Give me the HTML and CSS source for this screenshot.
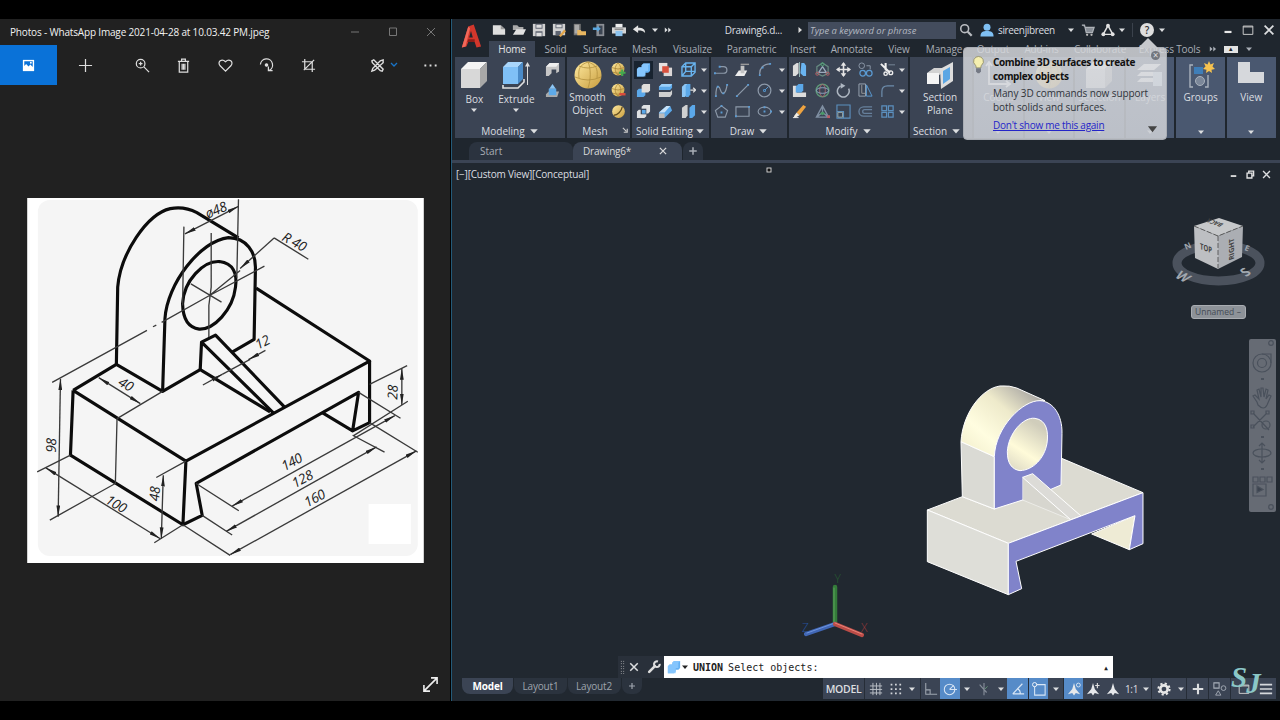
FILE: index.html
```html
<!DOCTYPE html>
<html lang="en">
<head>
  <meta charset="UTF-8" />
  <meta name="viewport" content="width=device-width, initial-scale=1.0"/>
  <title>Drawing6.dwg</title>
  <link rel="stylesheet" href="styles.css">
</head>
<body>
  <!-- Icon sprites -->
  <svg class="sprites" aria-hidden="true">
    <defs>
      <linearGradient id="goldFill" x1="0" y1="0" x2="1" y2="1"><stop offset="0" stop-color="#ffeaa0"/><stop offset="1" stop-color="#c89d3e"/></linearGradient>
      <linearGradient id="cyl" x1="0" y1="1" x2="1" y2="0"><stop offset="0" stop-color="#f0ecca"/><stop offset=".3" stop-color="#fffde0"/><stop offset=".6" stop-color="#eeeacb"/><stop offset="1" stop-color="#8f8d94"/></linearGradient>
      <linearGradient id="hole" x1="0" y1="1" x2=".5" y2="0"><stop offset="0" stop-color="#d9d5c2"/><stop offset=".45" stop-color="#fffbd9"/><stop offset="1" stop-color="#d0cdbb"/></linearGradient>
      <marker id="arr" viewBox="0 0 30 10" refX="30" refY="5" markerWidth="34" markerHeight="13" markerUnits="userSpaceOnUse" orient="auto-start-reverse"><path d="M0 0L30 5L0 10z" fill="#222"/></marker>
    </defs>
    <symbol id="caret" viewBox="0 0 8 8"><path d="M1 2.500h6L4 6z" fill="currentColor"/></symbol>
    <symbol id="more" viewBox="0 0 10 8"><path d="M1 1l3.500 3L1 7zM5.300 1l3.500 3-3.500 3z" fill="currentColor"/></symbol>
    <symbol id="new" viewBox="0 0 16 16"><path d="M1 2.500h9l5 4.500v6.500H1z" fill="#dedede"/><path d="M10 2.500v4.500h5z" fill="#999"/></symbol>
    <symbol id="open" viewBox="0 0 16 16"><path d="M1 13.500V2.500h5l2 2h5V8H1z" fill="#aaa"/><path d="M5 7h11l-3 6.500H1z" fill="#e1e1e1"/></symbol>
    <symbol id="save" viewBox="0 0 16 16"><path d="M1 1h14v14H1z" fill="#d0d0d0"/><path d="M4 1h8v5.500H4zM4 9.500h8V15H4z" fill="#5d6370"/><path d="M5 2h6v3.500H5zM5 11h6v4H5z" fill="#ddd"/></symbol>
    <symbol id="saveas" viewBox="0 0 16 16"><path d="M1 1h14v13H1z" fill="#d0d0d0"/><path d="M4 1h8v5H4zM4 9h6v5H4z" fill="#5d6370"/><path d="M5 2h6v3H5z" fill="#ddd"/><path d="M8 14.500l6-7 2 2L10 16z" fill="#e3a64b"/></symbol>
    <symbol id="import" viewBox="0 0 16 16"><path d="M2 1h8v13H2z" fill="#777"/><path d="M3 2h5v10H3z" fill="#aaa"/><path d="M6 8h4l1 1.500h5V14H6z" fill="#e8b660"/></symbol>
    <symbol id="export" viewBox="0 0 16 16"><path d="M5 1h9v14H5z" fill="#8b8f95"/><path d="M8 3h4v10H8z" fill="#3c4552"/><path d="M1 5h5V3l4 3.500L6 10V8H1z" fill="#59a7e0"/></symbol>
    <symbol id="print" viewBox="0 0 16 16"><path d="M4 1h8v4H4z" fill="#eee"/><path d="M0 5h16v7H0z" fill="#d4d4d4"/><path d="M4 9h8v6H4z" fill="#8cc3ee"/><path d="M3 6.500h10v1H3z" fill="#555"/></symbol>
    <symbol id="undo" viewBox="0 0 16 16"><path d="M1 7l6-4.500v3c5 0 8 1.500 8 6-2-2.500-4-3-8-3v3z" fill="#e4e4e4"/></symbol>
    <symbol id="search" viewBox="0 0 16 16"><circle cx="6.500" cy="6.500" r="4.500" fill="none" stroke="#b9bcc1" stroke-width="1.800"/><path d="M10 10l4.500 4.500" stroke="#b9bcc1" stroke-width="2.600"/></symbol>
    <symbol id="user" viewBox="0 0 16 16"><circle cx="8" cy="4.800" r="4" fill="#7fc0f4"/><path d="M.5 15.500c0-5.500 3-6.500 7.500-6.500s7.500 1 7.500 6.500z" fill="#7fc0f4"/></symbol>
    <symbol id="cart" viewBox="0 0 16 16"><path d="M1 2.500h3l2 8.500h7l2-6H5" fill="#888e96" stroke="#aeb2b8" stroke-width="1.400"/><circle cx="7" cy="13.500" r="1.300" fill="#bbb"/><circle cx="12" cy="13.500" r="1.300" fill="#bbb"/></symbol>
    <symbol id="apps" viewBox="0 0 16 16"><path d="M8 3L2.500 13h11z" fill="none" stroke="#e2e2e2" stroke-width="1.700"/><circle cx="8" cy="3" r="2.200" fill="#e2e2e2"/><circle cx="2.700" cy="12.800" r="2.200" fill="#e2e2e2"/><circle cx="13.300" cy="12.800" r="2.200" fill="#e2e2e2"/></symbol>
    <symbol id="minimize" viewBox="0 0 16 16"><path d="M4 9h8v2.500H4z" fill="#e8e8e8"/></symbol>
    <symbol id="maximize" viewBox="0 0 16 16"><path d="M2.500 3.500h11v9.500h-11zM2.500 4.500h11" fill="none" stroke="#ccc" stroke-width="1.100"/></symbol>
    <symbol id="restore" viewBox="0 0 16 16"><path d="M5.500 5V3h7v7h-2M3 6h7v7H3z" fill="none" stroke="#e3e3e3" stroke-width="2"/></symbol>
    <symbol id="close" viewBox="0 0 16 16"><path d="M3 3l10 10M13 3L3 13" stroke="currentColor" stroke-width="2"/></symbol>
    <symbol id="plus" viewBox="0 0 16 16"><path d="M8 2v12M2 8h12" stroke="currentColor" stroke-width="2.400"/></symbol>

    <!-- ribbon, large -->
    <symbol id="box" viewBox="0 0 28 28"><path d="M1 8L8 1h19l-7 7z" fill="#f4f4f4"/><path d="M1 8h19v19H1z" fill="#d8d8d8"/><path d="M20 8l7-7v19l-7 7z" fill="#a8a8a8"/></symbol>
    <symbol id="extrude" viewBox="0 0 28 28"><path d="M1 6l5-5h15l-5 5z" fill="#a9d6fb"/><path d="M1 6h15v17H1z" fill="#7fc0f6"/><path d="M16 6l5-5v17l-5 5z" fill="#4a8bc8"/><path d="M1 24v3h15l6-6v-3" fill="none" stroke="#e1e1e1" stroke-width="1.600"/><path d="M25.500 4v20" stroke="#ddd"/><path d="M23 5.500L25.500 1 28 5.500z" fill="#ddd"/></symbol>
    <symbol id="sphere" viewBox="0 0 28 28"><circle cx="14" cy="14" r="13.500" fill="url(#goldFill)"/><path d="M1 16q13 6 26 0M14 1c-8 3-10 6-9 16M14 1c3 6 3 18 0 26M14 1c8 3 10 6 9 16M5 5q9 4 18 0" fill="none" stroke="#b3913f" stroke-width=".8"/></symbol>
    <symbol id="section" viewBox="0 0 28 28"><path d="M1 12l7-5h11v4l-6 3v9H1z" fill="#d2d2d2"/><path d="M1 12h12v11H1z" fill="#f4f4f4"/><path d="M14 8L27 1v19l-12 8z" fill="#ddd"/><path d="M17 10l7-4v12l-7 5z" fill="#5ba6e4"/></symbol>
    <symbol id="groups" viewBox="0 0 28 28"><path d="M6 4H3v22h3M18 26h3V14" fill="none" stroke="#aab2bd" stroke-width="1.400"/><path d="M7 6h9v7H7z" fill="#3f7eb8"/><circle cx="13" cy="20" r="4.500" fill="#7b8799" stroke="#aab2bd"/><path d="M22 0l1.500 3.500L27 2l-1.500 3.500L28 8l-3.500.7L25 12l-3-2-3 2 .5-3.300L16 8l2.500-2.500L17 2l3.500 1.500z" fill="#f6c24f"/></symbol>
    <symbol id="viewbig" viewBox="0 0 28 28"><path d="M1 1h12v10h14v11H1z" fill="#d6d8dc"/></symbol>
    <symbol id="coords" viewBox="0 0 28 28"><path d="M5 2v21h20M2 5l3-4 3 4M22 20l4 3-4 3" fill="none" stroke="#eee" stroke-width="1.800"/></symbol>
    <symbol id="layers" viewBox="0 0 28 28"><path d="M1 9l7-6h17l-7 6zM1 15l4-4h17l-4 4zM1 21l4-4h12v4z" fill="#f3f3f3"/><path d="M17 11h9v14h-9z" fill="#c5d7e8"/></symbol>

    <!-- ribbon, small -->
    <symbol id="polysolid" viewBox="0 0 16 16"><path d="M1 5l4-4h10v9l-3 2V8H7v4l-3 3H1z" fill="#c6c6c6"/><path d="M1 5l4-4h10l-3 4z" fill="#efefef"/></symbol>
    <symbol id="presspull" viewBox="0 0 16 16"><path d="M1 12l3-3h11l-2 6H1z" fill="#aaa"/><path d="M4 6h8v7H4z" fill="#5da9e8"/><path d="M8 1l3.500 5h-7z" fill="#8cc6f5"/></symbol>
    <symbol id="ball" viewBox="0 0 16 16"><circle cx="7.500" cy="7.500" r="6.800" fill="url(#goldFill)"/><path d="M1 6q6.500 3 13 0M2 11q5.500 2 11 0M7.500 1c-4 4-4 9 0 13M7.500 1c4 4 4 9 0 13" fill="none" stroke="#a78336" stroke-width=".8"/></symbol>
    <symbol id="meshmore" viewBox="0 0 16 16"><use href="#ball"/><path d="M12 8v7M8.500 11.500h7" stroke="#43a84d" stroke-width="2.300"/></symbol>
    <symbol id="meshless" viewBox="0 0 16 16"><use href="#ball"/><path d="M9 12h6.500" stroke="#d84a3c" stroke-width="2.600"/></symbol>
    <symbol id="refine" viewBox="0 0 16 16"><circle cx="8" cy="8" r="6.800" fill="url(#goldFill)"/><path d="M3 12c4 0 8-4 9-9" fill="none" stroke="#675020" stroke-width="1.400"/></symbol>
    <symbol id="union" viewBox="0 0 16 16"><path d="M1 7l2-2h3V3l2-2h7v8l-2 2h-3v2l-2 2H1z" fill="#64b1f3"/><path d="M1 7l2-2h3V3l2-2h7l-2 2v6h-3v6H1z" fill="#8ccbff" opacity=".8"/></symbol>
    <symbol id="intersect" viewBox="0 0 16 16"><path d="M1 1h9v9H1z" fill="#e6e0df"/><path d="M6 6h9v9H6z" fill="#dcd7d7"/><path d="M4.500 4.500h7v7h-7z" fill="#d9513e"/></symbol>
    <symbol id="cubewire" viewBox="0 0 16 16"><path d="M1 5l4-4h10v10l-4 4H1zM1 5h10v10M11 5l4-4M5 1v9h10M5 10l-4 5" fill="none" stroke="#68b3ee" stroke-width="1.500"/></symbol>
    <symbol id="subtract" viewBox="0 0 16 16"><path d="M1 8l2-2h7v7l-2 2H1z" fill="#5ba8e9"/><path d="M6 3l2-2h7v7l-2 2H6z" fill="#e0ddda"/></symbol>
    <symbol id="slice" viewBox="0 0 16 16"><path d="M1 4l3-3h11v4l-2 2.500H1z" fill="#5ba8e9"/><path d="M1 4l3-3h11l-2 3z" fill="#9bd0fa"/><path d="M1 9.500h12l2-2V12l-2 3H1z" fill="#d0d0d0"/></symbol>
    <symbol id="extface" viewBox="0 0 16 16"><path d="M1 4l3-3h3v11l-3 3H1z" fill="#8cc6f5"/><path d="M5 3l2-2h3v11l-2 3H5z" fill="#5ba8e9"/><path d="M10 7.500h5M13 5l2.500 2.500L13 10" stroke="#ddd" stroke-width="1.400" fill="none"/></symbol>
    <symbol id="interfere" viewBox="0 0 16 16"><path d="M1 8l2-2h8v7l-2 2H1zM6 3l2-2h7v7l-2 2H6z" fill="#dfe1e3"/><path d="M5 5h6v6H5z" fill="#3b4454"/><path d="M6.300 6.300h4v4h-4z" fill="#5ba8e9"/></symbol>
    <symbol id="fillet3" viewBox="0 0 16 16"><path d="M1 9l8-7h4l2 5-8 8H1z" fill="#5ba8e9"/><path d="M1 9l8-7h4L7 9z" fill="#c9e2f7"/><path d="M1 10h6v5H1z" fill="#bbb"/></symbol>
    <symbol id="split" viewBox="0 0 16 16"><path d="M1 4l4-3h2v11l-2 3H1z" fill="#d0d0d0"/><path d="M9 4l3-3h3v11l-3 3H9z" fill="#5ba8e9"/></symbol>
    <symbol id="polyline" viewBox="0 0 16 16"><path d="M1 12h9c5 0 5-7 0-7H6" fill="none" stroke="#8d99a9" stroke-width="1.300"/><path d="M0 11h2v2H0zM5 4h2v2H5z" fill="#5b9bd3"/></symbol>
    <symbol id="planar" viewBox="0 0 16 16"><path d="M4 9h9l-3 6H0z" fill="#ececec"/><path d="M6 4h4v8H6z" fill="#c3c3c3"/><path d="M6 2.500h9" stroke="#999" stroke-width="1.500"/></symbol>
    <symbol id="arc" viewBox="0 0 16 16"><path d="M3 14C2 7 7 2 14 2" fill="none" stroke="#8d99a9" stroke-width="1.300"/><path d="M2 13h2v2H2zM5 5h2v2H5zM13 1h2v2h-2z" fill="#5b9bd3"/></symbol>
    <symbol id="spline" viewBox="0 0 16 16"><path d="M2 14C2 7 3 3 5 4s2 8 5 7 3-5 4-9" fill="none" stroke="#8d99a9" stroke-width="1.300"/><path d="M1 13h2v2H1zM3 3h2v2H3zM9 10h2v2H9zM13 1h2v2h-2z" fill="#5b9bd3"/></symbol>
    <symbol id="line" viewBox="0 0 16 16"><path d="M2 14L14 2" stroke="#8d99a9" stroke-width="1.300"/><path d="M1 13h2v2H1zM13 1h2v2h-2z" fill="#5b9bd3"/></symbol>
    <symbol id="circle" viewBox="0 0 16 16"><circle cx="8" cy="8" r="6.800" fill="none" stroke="#8d99a9" stroke-width="1.300"/><path d="M8 8l4-4M7 7h2v2H7z" stroke="#5b9bd3"/></symbol>
    <symbol id="polygon" viewBox="0 0 16 16"><path d="M8 2l6.500 5-2.500 7H4L1.500 7z" fill="none" stroke="#8d99a9" stroke-width="1.200"/><path d="M7 8h2v2H7zM7 1h2v2H7z" fill="#5b9bd3"/></symbol>
    <symbol id="rect" viewBox="0 0 16 16"><path d="M1 3h14v10H1z" fill="none" stroke="#8d99a9" stroke-width="1.200"/><path d="M0 12h2v2H0zM14 2h2v2h-2z" fill="#5b9bd3"/></symbol>
    <symbol id="ellipse" viewBox="0 0 16 16"><ellipse cx="8" cy="8" rx="6.800" ry="4.700" fill="none" stroke="#8d99a9" stroke-width="1.200"/><path d="M7 7h2v2H7zM14 7h2v2h-2zM7 2.500h2v2H7z" fill="#5b9bd3"/></symbol>
    <symbol id="mirror3" viewBox="0 0 16 16"><path d="M1 4l4-3h2v11l-3 3H1z" fill="#dcdcdc"/><path d="M10 1h3l2 3v11h-3l-3-3z" fill="#6ab4f1"/><path d="M8 0v16" stroke="#9bb"/></symbol>
    <symbol id="gizmomove" viewBox="0 0 16 16"><path d="M8 1l6 4v7l-6 3-6-3V5z" fill="none" stroke="#678b82" stroke-width="1.300"/><path d="M8 5l4 6H4z" stroke="#9aa9bb" fill="none" stroke-width="1.400"/><circle cx="2.500" cy="12.500" r="1.700" fill="none" stroke="#b95c64"/><circle cx="13.500" cy="12.500" r="1.700" fill="none" stroke="#b95c64"/><circle cx="8" cy="2.500" r="1.600" fill="none" stroke="#4daa72"/></symbol>
    <symbol id="move" viewBox="0 0 16 16"><path d="M8 1v14M1 8h14" stroke="#e5e5e5" stroke-width="1.700"/><path d="M8 0l3 4H5zM8 16l3-4H5zM0 8l4-3v6zM16 8l-4-3v6z" fill="#e5e5e5"/></symbol>
    <symbol id="copy" viewBox="0 0 16 16"><circle cx="4" cy="4" r="3" fill="none" stroke="#8d99a9"/><circle cx="5" cy="12" r="3" fill="none" stroke="#5b9bd3" stroke-width="1.300"/><circle cx="12" cy="12" r="3" fill="none" stroke="#5b9bd3" stroke-width="1.300"/><path d="M9 4h4v4" stroke="#8d99a9" fill="none"/></symbol>
    <symbol id="trim" viewBox="0 0 16 16"><path d="M1 2l9 9M6 1v7l5 3" stroke="#eee" stroke-width="2.200" fill="none"/><circle cx="6" cy="12.500" r="1.800" fill="none" stroke="#eee" stroke-width="1.500"/><circle cx="11.500" cy="11.500" r="2" fill="none" stroke="#eee" stroke-width="1.500"/><path d="M9 3h7" stroke="#789"/></symbol>
    <symbol id="align" viewBox="0 0 16 16"><path d="M1 3h4v9H1zM1 10h14v5H1z" fill="#ddd"/><path d="M4 4l3-3h5v7l-2 2H4z" fill="#5ba8e9"/></symbol>
    <symbol id="gizmorot" viewBox="0 0 16 16"><circle cx="8" cy="8" r="6.800" fill="none" stroke="#5f9c79" stroke-width="1.400"/><ellipse cx="8" cy="8" rx="3" ry="6.500" fill="none" stroke="#aa646c"/><ellipse cx="8" cy="8" rx="6.500" ry="3" fill="none" stroke="#8fa9c4"/></symbol>
    <symbol id="rotate" viewBox="0 0 16 16"><path d="M5 3A6.300 6.300 0 1 0 13.500 6" fill="none" stroke="#aeb7c2" stroke-width="1.600"/><path d="M5 0l5 3-5 3z" fill="#aeb7c2"/></symbol>
    <symbol id="mirror" viewBox="0 0 16 16"><path d="M1 1h7v13H1z" fill="none" stroke="#9aa5b3"/><path d="M9 2l6 12H9z" fill="none" stroke="#5b9bd3"/><path d="M4 2v9h4" fill="none" stroke="#999"/></symbol>
    <symbol id="fillet" viewBox="0 0 16 16"><path d="M2 15V9q0-6 6-6h7" fill="none" stroke="#6d8cab" stroke-width="1.300"/></symbol>
    <symbol id="erase" viewBox="0 0 16 16"><path d="M5 9l7-8 3 2-7 9z" fill="#eea340"/><path d="M5 9l3 3-5 3-1-2z" fill="#f5eee0"/><path d="M1 14.500h6" stroke="#eee"/></symbol>
    <symbol id="gizmoscale" viewBox="0 0 16 16"><path d="M8 2L1.500 14h13zM8 2v7L1.500 14M8 9l6.500 5" fill="none" stroke="#7f8fa2" stroke-width="1.400"/><path d="M5 10l3-2 3 2-3 2z" fill="#4b9a69"/><path d="M13 12h3v3h-3z" fill="#b95c64"/></symbol>
    <symbol id="scale" viewBox="0 0 16 16"><path d="M1 1h14v14H1zM1 8h7v7" fill="none" stroke="#5b8fbe" stroke-width="1.200"/><path d="M2 9h5v5H2z" fill="none" stroke="#9aa"/></symbol>
    <symbol id="offset" viewBox="0 0 16 16"><path d="M15 3H6a5 5 0 0 0 0 10h9M15 6H7a2 2 0 0 0 0 4h8" fill="none" stroke="#67809c" stroke-width="1.400"/></symbol>
    <symbol id="array" viewBox="0 0 16 16"><path d="M2 2h5v5H2zM9 2h5v5H9zM2 9h5v5H2zM9 9h5v5H9z" fill="none" stroke="#5b8fbe" stroke-width="1.300"/></symbol>

    <!-- status bar -->
    <symbol id="sgrid" viewBox="0 0 16 16"><path d="M4.500 1v14M8.500 1v14M12.500 1v14M1 4.500h14M1 8.500h14M1 12.500h14" stroke="#b8bdc5" stroke-width="1.100"/></symbol>
    <symbol id="sdots" viewBox="0 0 16 16"><path d="M3 3h12M3 8h12M3 13h12" stroke="#d2d5da" stroke-width="2" stroke-dasharray="2 3"/></symbol>
    <symbol id="ortho" viewBox="0 0 16 16"><path d="M2 1v13h13M2 9h5v5" fill="none" stroke="#9fa6b0" stroke-width="1.200"/></symbol>
    <symbol id="polar" viewBox="0 0 16 16"><circle cx="7.500" cy="8.500" r="6" fill="none" stroke="#d7e5f5" stroke-width="1.200"/><path d="M7.500 8.500H16M7.500 8.500L12 4" stroke="#d7e5f5" stroke-width="1.200"/></symbol>
    <symbol id="iso" viewBox="0 0 16 16"><path d="M8 1v14M3 3l8 9" stroke="#858d99" stroke-width="1.300"/><path d="M9 8l3-3" stroke="#699f7b"/></symbol>
    <symbol id="otrack" viewBox="0 0 16 16"><path d="M2 13.500L13 2M2 13.500h13M8 8q3 2 2.500 5" fill="none" stroke="#d9e7f6" stroke-width="1.300"/></symbol>
    <symbol id="osnap" viewBox="0 0 16 16"><path d="M3 3h12v12H3z" fill="none" stroke="#d9e7f6" stroke-width="1.200"/><circle cx="3" cy="3" r="2.400" fill="#568bc8" stroke="#fff"/></symbol>
    <symbol id="anno" viewBox="0 0 16 16"><path d="M8 1l2 7 5 6-5-1.500-2 3-2-3L1 14l5-6z" fill="#e6e8eb"/></symbol>
    <symbol id="annovis" viewBox="0 0 16 16"><use href="#anno"/><circle cx="13" cy="3.500" r="2.200" fill="none" stroke="#e1eaf5"/></symbol>
    <symbol id="annoauto" viewBox="0 0 16 16"><use href="#anno"/><path d="M13 1v6M10.500 4h5" stroke="#ddd" stroke-width="1.300"/></symbol>
    <symbol id="gear" viewBox="0 0 16 16"><circle cx="8" cy="8" r="4.200" fill="none" stroke="#e6e6e6" stroke-width="3"/><circle cx="8" cy="8" r="6.400" fill="none" stroke="#e6e6e6" stroke-width="2.300" stroke-dasharray="2.500 2.520"/></symbol>
    <symbol id="isolate" viewBox="0 0 16 16"><path d="M1 1h6v6H1z" fill="none" stroke="#a9b0ba" stroke-width="1.200"/><circle cx="12" cy="7" r="2.700" fill="none" stroke="#a9b0ba"/><path d="M6 10l3 5H3z" fill="none" stroke="#a9b0ba"/></symbol>
    <symbol id="menu" viewBox="0 0 16 16"><path d="M1 3h14M1 8h14M1 13h14" stroke="#d5d8dc" stroke-width="1.800"/></symbol>
    <symbol id="wrench" viewBox="0 0 16 16"><path d="M2.500 13.500L9 7" stroke="#ddd" stroke-width="3" stroke-linecap="round"/><path d="M12.500 1.800A3.200 3.200 0 1 0 14.500 4.500" fill="none" stroke="#ddd" stroke-width="2.400"/></symbol>
  </svg>

  <div class="desktop">
    <!-- Photos window -->
    <section class="photos">
      <header class="photos-title">
        <span>Photos - WhatsApp Image 2021-04-28 at 10.03.42 PM.jpeg</span>
        <svg viewBox="0 0 90 14"><path d="M1 7h8M39.500 3h7v7.500h-7zM77 3l8 8M85 3l-8 8" fill="none" stroke="#777"/></svg>
      </header>
      <nav class="photos-tools">
        <a class="current"><svg viewBox="0 0 16 16"><path d="M2 2h12v12H2z" fill="#fff"/><path d="M3.500 8.500V3.500h9v6L10 7 8 9 5.500 6.500z" fill="#0a72d8"/><circle cx="10.500" cy="5" r="1" fill="#fff"/></svg></a>
        <a><svg viewBox="0 0 16 16"><path d="M8 1v14M1 8h14"/></svg></a>
        <a class="first"><svg viewBox="0 0 16 16"><circle cx="6" cy="6" r="4.600"/><path d="M9.500 9.500l5.500 5.500M6 4v4M4 6h4"/></svg></a>
        <a><svg viewBox="0 0 16 16"><path d="M3.500 3.500h9V15h-9zM2 3.500h12M6 3V1.300h4V3M6.500 6v6.500M9.500 6v6.500M8 6v6.500"/></svg></a>
        <a><svg viewBox="0 0 16 16"><path d="M8 14L2 8C-1 4 4 0 8 4c4-4 9 0 6 4z"/></svg></a>
        <a><svg viewBox="0 0 16 16"><path d="M1.500 7a6.500 6.500 0 1 1 9 6.500M10 9v4.500h4.500"/><circle cx="8" cy="7.500" r="1.300" fill="#ddd"/></svg></a>
        <a><svg viewBox="0 0 16 16"><path d="M4 1v11h11M1 4h11v11M3 13L14 2"/></svg></a>
        <a class="edit"><svg viewBox="0 0 16 16"><path d="M2 3l2-1 10 10-1 2-2-.5L2.500 5zM14 2L11 3 3 11l-1 3 3-1L14 5z" stroke-width="1.500"/></svg><svg class="down" viewBox="0 0 8 8"><path d="M1 2l3 3 3-3"/></svg></a>
        <a class="dots"><svg viewBox="0 0 16 16"><path d="M1.500 8h2M7 8h2M12.500 8h2" stroke-width="2"/></svg></a>
      </nav>
      <div class="photo">
        <svg viewBox="20 22 1192 1097">
          <path d="M20 22h1192v1097H20z" fill="#fff"/>
          <rect x="52" y="28" width="1142" height="1070" rx="36" fill="#f5f5f5"/>
          <path d="M1046 942h127v120h-127z" fill="#fff"/>
          <g class="outline">
            <path d="M288 522L292 290C300 190 380 70 450 54Q492 46 530 66L655 142"/>
            <path d="M427 603L434 385C440 280 540 150 625 141C680 142 706 185 706 230L702 447L636 485"/>
            <path d="M158 600L288 522L427 603L540 538L750 665M158 600L497 813L1049 512L708 293M158 600L150 795L488 1004L497 813"/>
            <path d="M488 1004L546 976L528 880L1016 606L998 722L1049 697V512M908 668L998 722"/>
            <path d="M540 538L544 455L586 434L795 652M544 455L762 670"/>
            <path d="M487 340C490 270 550 210 598 213C640 218 652 250 646 290C638 360 580 418 537 416C505 412 488 385 487 340z"/>
          </g>
          <g class="dims">
            <path d="M95 576L380 420M398 409L408 404M424 396L568 315L733 227M573 127V290L566 345V440M512 280L604 335M568 315L660 240M655 26L650 262M491 108L487 345"/>
            <path d="M290 685L427 603M290 685L285 880L88 990M50 845L150 795M402 1058L488 1004M408 862L497 813M488 1004L630 1096M528 880L656 962M546 976L636 1035M1049 697L1194 786M998 735L1094 786M1016 606L1142 684M1049 582L1162 526M1000 737L1164 633M762 142L865 206"/>
            <path d="M494 130L655 47" marker-start="url(#arr)" marker-end="url(#arr)"/>
            <path d="M762 142L660 234" marker-end="url(#arr)"/>
            <path d="M235 562L360 640" marker-start="url(#arr)" marker-end="url(#arr)"/>
            <path d="M120 565L113 980" marker-start="url(#arr)" marker-end="url(#arr)"/>
            <path d="M76 833L420 1046" marker-start="url(#arr)" marker-end="url(#arr)"/>
            <path d="M429 855L423 1046" marker-start="url(#arr)" marker-end="url(#arr)"/>
            <path d="M636 948L1125 676" marker-start="url(#arr)" marker-end="url(#arr)"/>
            <path d="M618 1024L1070 770" marker-start="url(#arr)" marker-end="url(#arr)"/>
            <path d="M630 1094L1190 782" marker-start="url(#arr)" marker-end="url(#arr)"/>
            <path d="M1146 534V644" marker-start="url(#arr)" marker-end="url(#arr)"/>
            <path d="M548 584L606 552" marker-end="url(#arr)"/><path d="M606 552L690 507"/><path d="M736 480L685 508" marker-end="url(#arr)"/>
          </g>
          <g class="dimtext">
            <text transform="translate(563 84) rotate(-23)">ø48</text>
            <text transform="translate(783 148) rotate(29)">R 40</text>
            <text transform="translate(714 478) rotate(-27)">12</text>
            <text transform="translate(291 583) rotate(31)">40</text>
            <text transform="translate(106 788) rotate(-88)">98</text>
            <text transform="translate(416 934) rotate(-86)">48</text>
            <text transform="translate(1132 628) rotate(-88)">28</text>
            <text transform="translate(252 937) rotate(31)">100</text>
            <text transform="translate(793 843) rotate(-28)">140</text>
            <text transform="translate(825 894) rotate(-28)">128</text>
            <text transform="translate(862 952) rotate(-28)">160</text>
          </g>
        </svg>
      </div>
      <footer class="photos-foot"><svg viewBox="0 0 16 16"><path d="M2 14L14 2M8.500 1.800H14.200V7.500M1.800 8.500V14.200H7.500" fill="none" stroke="#eee" stroke-width="1.500"/></svg></footer>
    </section>

    <!-- CAD window -->
    <section class="cad">
      <header class="cad-head">
        <div class="app-logo"><svg viewBox="0 0 24 28"><path d="M2 26L9 3l6-2 8 24-5 1-2-6H9l-2 5z" fill="#d2372c"/><path d="M10 15h4l-2-7z" fill="#1f262e"/><path d="M2 26L9 3l2 2-5 20z" fill="#f0685a"/><path d="M9 17h7v3H8z" fill="#8e1d18"/></svg></div>
        <div class="head-rows">
          <div class="title-row">
            <svg><use href="#new"/></svg><svg><use href="#open"/></svg><svg><use href="#save"/></svg><svg><use href="#saveas"/></svg><svg><use href="#import"/></svg><svg><use href="#export"/></svg><svg><use href="#print"/></svg><svg><use href="#undo"/></svg>
            <svg class="c"><use href="#caret"/></svg><svg class="c"><use href="#more"/></svg>
            <span class="doc-name">Drawing6.d...</span>
            <svg class="c" viewBox="0 0 8 8"><path d="M2.500 1L6 4 2.500 7z" fill="#ddd"/></svg>
            <span class="search-box">Type a keyword or phrase</span>
            <svg><use href="#search"/></svg><svg><use href="#user"/></svg>
            <span class="user-name">sireenjibreen</span>
            <svg class="c"><use href="#caret"/></svg><svg><use href="#cart"/></svg><svg><use href="#apps"/></svg><svg class="c"><use href="#caret"/></svg>
            <i class="sep"></i><span class="help">?</span><svg class="c"><use href="#caret"/></svg><i></i>
            <svg><use href="#minimize"/></svg><svg><use href="#maximize"/></svg><svg><use href="#close"/></svg>
          </div>
          <nav class="tab-row">
            <a class="active">Home</a><a>Solid</a><a>Surface</a><a>Mesh</a><a>Visualize</a><a>Parametric</a><a>Insert</a><a>Annotate</a><a>View</a><a>Manage</a><a>Output</a><a>Add-ins</a><a>Collaborate</a><a>Express Tools</a>
            <svg class="c"><use href="#more"/></svg><i class="collapse">▴</i><svg class="c"><use href="#caret"/></svg>
          </nav>
        </div>
      </header>

      <div class="ribbon">
        <div class="panel modeling">
          <div class="tools">
            <div class="big"><svg><use href="#box"/></svg><span>Box</span><svg class="c"><use href="#caret"/></svg></div>
            <div class="big"><svg><use href="#extrude"/></svg><span>Extrude</span><svg class="c"><use href="#caret"/></svg></div>
            <div class="small one"><svg><use href="#polysolid"/></svg><svg><use href="#presspull"/></svg></div>
          </div>
          <footer>Modeling <svg class="c"><use href="#caret"/></svg></footer>
        </div>
        <div class="panel mesh">
          <div class="tools">
            <div class="big"><svg><use href="#sphere"/></svg><span>Smooth Object</span></div>
            <div class="small one"><svg><use href="#meshmore"/></svg><svg><use href="#meshless"/></svg><svg><use href="#refine"/></svg></div>
          </div>
          <footer>Mesh <svg class="launch" viewBox="0 0 8 8"><path d="M1 1l4 4M6 2v4H2" fill="none" stroke="#ccc" stroke-width="1.300"/></svg></footer>
        </div>
        <div class="panel editing">
          <div class="tools small">
            <svg class="on"><use href="#union"/></svg><svg><use href="#intersect"/></svg><svg><use href="#cubewire"/></svg><svg class="c"><use href="#caret"/></svg>
            <svg><use href="#subtract"/></svg><svg><use href="#slice"/></svg><svg><use href="#extface"/></svg><svg class="c"><use href="#caret"/></svg>
            <svg><use href="#interfere"/></svg><svg><use href="#fillet3"/></svg><svg><use href="#split"/></svg><svg class="c"><use href="#caret"/></svg>
          </div>
          <footer>Solid Editing <svg class="c"><use href="#caret"/></svg></footer>
        </div>
        <div class="panel draw">
          <div class="tools small">
            <svg><use href="#polyline"/></svg><svg><use href="#planar"/></svg><svg><use href="#arc"/></svg><svg class="c"><use href="#caret"/></svg>
            <svg><use href="#spline"/></svg><svg><use href="#line"/></svg><svg><use href="#circle"/></svg><svg class="c"><use href="#caret"/></svg>
            <svg><use href="#polygon"/></svg><svg><use href="#rect"/></svg><svg><use href="#ellipse"/></svg><svg class="c"><use href="#caret"/></svg>
          </div>
          <footer>Draw <svg class="c"><use href="#caret"/></svg></footer>
        </div>
        <div class="panel modify">
          <div class="tools small">
            <svg><use href="#mirror3"/></svg><svg><use href="#gizmomove"/></svg><svg><use href="#move"/></svg><svg><use href="#copy"/></svg><svg><use href="#trim"/></svg><svg class="c"><use href="#caret"/></svg>
            <svg><use href="#align"/></svg><svg><use href="#gizmorot"/></svg><svg><use href="#rotate"/></svg><svg><use href="#mirror"/></svg><svg><use href="#fillet"/></svg><svg class="c"><use href="#caret"/></svg>
            <svg><use href="#erase"/></svg><svg><use href="#gizmoscale"/></svg><svg><use href="#scale"/></svg><svg><use href="#offset"/></svg><svg><use href="#array"/></svg><svg class="c"><use href="#caret"/></svg>
          </div>
          <footer>Modify <svg class="c"><use href="#caret"/></svg></footer>
        </div>
        <div class="panel section">
          <div class="tools"><div class="big"><svg><use href="#section"/></svg><span>Section Plane</span></div></div>
          <footer>Section <svg class="c"><use href="#caret"/></svg></footer>
        </div>
        <div class="panel folded"><svg><use href="#coords"/></svg><span>Coor...</span><svg class="c"><use href="#caret"/></svg></div>
        <div class="panel folded"><svg><use href="#sphere"/></svg><span>View</span><svg class="c"><use href="#caret"/></svg></div>
        <div class="panel folded"><svg><use href="#box"/></svg><span>Selection</span><svg class="c"><use href="#caret"/></svg></div>
        <div class="panel folded"><svg><use href="#layers"/></svg><span>Layers</span><svg class="c"><use href="#caret"/></svg></div>
        <div class="panel folded"><svg><use href="#groups"/></svg><span>Groups</span><svg class="c"><use href="#caret"/></svg></div>
        <div class="panel folded"><svg><use href="#viewbig"/></svg><span>View</span><svg class="c"><use href="#caret"/></svg></div>
      </div>

      <nav class="file-tabs">
        <a class="start">Start</a>
        <a class="open">Drawing6* <svg><use href="#close"/></svg></a>
        <a class="add"><svg><use href="#plus"/></svg></a>
      </nav>

      <main class="viewport">
        <svg class="scene" viewBox="451 163 828 538">
          <rect x="767" y="168" width="4" height="4" fill="#111" stroke="#ddd" stroke-width=".9"/>
          <!-- solid model -->
          <g transform="translate(910 370) scale(.33333)" stroke="#fff" stroke-width="3" stroke-linejoin="round">
            <path d="M52 420L157 380L253 417L455 265L699 368L295 520z" fill="#dcdbd2"/>
            <path d="M52 420L295 520V674L52 575z" fill="#deded8"/>
            <path d="M153 215L157 380L253 417V260z" fill="#dadad4"/>
            <path d="M153 215C158 130 215 55 270 48Q300 46 320 54L405 92C345 90 262 170 253 260z" fill="url(#cyl)"/>
            <path d="M253 417V260C256 170 340 90 390 92C430 95 457 135 456 190L453 345L425 357L338 390z" fill="#8083ca"/>
            <path d="M292 245C295 190 340 140 375 145C410 150 416 185 411 220C403 265 370 300 330 302C305 298 292 280 292 245z" fill="url(#hole)"/>
            <path d="M338 322V390L482 449z" fill="#d7d6cf" stroke-width="1.500"/>
            <path d="M338 322L368 311L513 438L482 449z" fill="#dcdbd7"/>
            <path d="M545 492L675 437L658 539z" fill="#eeebd5"/>
            <path d="M295 520L699 368V521L658 539L675 437L318 574L335 656L295 674z" fill="#8083ca"/>
          </g>
          <!-- UCS icon -->
          <g stroke-linecap="round">
            <path d="M835 624V587" stroke="#347c3a" stroke-width="4.500"/><path d="M834 622V588" stroke="#5ba45b" stroke-width="1"/>
            <path d="M835 624L806 634" stroke="#4167b5" stroke-width="4.200"/><path d="M835 623L807 633" stroke="#6f94dc"/>
            <path d="M835 624L862 635" stroke="#bb4c47" stroke-width="4.200"/><path d="M835 623L862 634" stroke="#e88378"/>
          </g>
          <g class="axis"><text x="834.500" y="583" fill="#275f30">Y</text><text x="802" y="632" fill="#25509c">Z</text><text x="861" y="632" fill="#983a3b">X</text></g>
          <!-- view cube -->
          <ellipse cx="1218.500" cy="263" rx="41.500" ry="18" fill="none" stroke="#4b525d" stroke-width="9"/>
          <g class="compass"><text transform="translate(1174 277) rotate(28) skewX(-20)">W</text><text transform="translate(1246 277) rotate(-30) skewX(20)">S</text><text class="far" transform="translate(1186 250) rotate(-25)">N</text><text class="far" transform="translate(1244 250) rotate(20)">E</text></g>
          <path d="M1194 226L1219 218L1243 226L1218 236z" fill="#c6c8ca"/>
          <path d="M1194 226L1218 236V269L1195 258z" fill="#bdbfc2"/>
          <path d="M1243 226L1218 236V269L1242 257z" fill="#abaeb3"/>
          <path d="M1194 226L1218 236L1243 226M1218 236V268" fill="none" stroke="#555" stroke-width=".9" stroke-dasharray="5 2"/>
          <g class="faces"><text transform="matrix(.85 .3 0 1.200 1200 249)">TOP</text><text transform="translate(1234 259) rotate(-90) skewX(20)">RIGHT</text><text transform="matrix(-.8 -.3 .8 -.6 1224 224)">BACK</text></g>
        </svg>
        <div class="view-head">
          <span>[−][Custom View][Conceptual]</span>
          <svg><use href="#minimize"/></svg><svg><use href="#restore"/></svg><svg><use href="#close"/></svg>
        </div>
        <div class="ucs-name">Unnamed <i>–</i></div>
        <div class="navbar">
          <svg viewBox="0 0 26 172" fill="none" stroke="#4a515c" stroke-width="1.200">
            <circle cx="22" cy="4" r="2.300"/><circle cx="22" cy="168" r="2.300"/>
            <circle cx="13" cy="24" r="9"/><circle cx="13" cy="24" r="4.500"/><path d="M13 15h9v9"/>
            <path d="M8 63l-4-6 2-1 4 4-2-9 2-1 2 8v-9h2l1 9 2-8 2 1-2 9 3-4 2 1-4 9q-3 6-9 0z"/>
            <path d="M4 74l16 17M18 74L4 88M2 72h3v3H2zM17 72h3v3h-3zM2 86h3v3H2z"/><circle cx="17" cy="86" r="4"/>
            <ellipse cx="13" cy="114" rx="9" ry="4"/><path d="M13 104v20M10 107l3-3 3 3M10 121l3 3 3-3"/>
            <path d="M4 138h5v5H4zM11 138h5v5h-5zM18 138h5v5h-5zM4 145h13v12H4z"/><path d="M8 147l6 3.500-6 3z" fill="#3d4450"/>
            <path d="M12 40h3M12 98h3M12 130h3" stroke-width="2"/>
          </svg>
        </div>
        <div class="command">
          <div class="handle"><i></i><svg><use href="#close"/></svg><svg class="wr"><use href="#wrench"/></svg></div>
          <div class="prompt"><svg><use href="#union"/></svg><svg class="c"><use href="#caret"/></svg><b>UNION</b><span>Select objects:</span><em>▴</em></div>
        </div>
        <div class="bottom">
          <nav class="layouts"><a class="active">Model</a><a>Layout1</a><a>Layout2</a><a class="add"><svg><use href="#plus"/></svg></a></nav>
          <div class="status">
            <b>MODEL</b>
            <span class="l"><svg><use href="#sgrid"/></svg></span><span><svg><use href="#sdots"/></svg></span><span><svg class="c"><use href="#caret"/></svg></span>
            <span class="l"><svg><use href="#ortho"/></svg></span><span class="on"><svg><use href="#polar"/></svg></span><span><svg class="c"><use href="#caret"/></svg></span>
            <span><svg><use href="#iso"/></svg></span><span><svg class="c"><use href="#caret"/></svg></span>
            <span class="on"><svg><use href="#otrack"/></svg></span><span class="on l"><svg><use href="#osnap"/></svg></span><span><svg class="c"><use href="#caret"/></svg></span>
            <span class="on l"><svg><use href="#annovis"/></svg></span><span><svg><use href="#annoauto"/></svg></span><span><svg><use href="#anno"/></svg></span>
            <span>1:1</span><span><svg class="c"><use href="#caret"/></svg></span>
            <span class="l"><svg><use href="#gear"/></svg></span><span><svg class="c"><use href="#caret"/></svg></span>
            <span class="l"><svg><use href="#plus"/></svg></span><span class="l"><svg><use href="#isolate"/></svg></span><span class="l"><svg><use href="#maximize"/></svg></span><span><svg><use href="#menu"/></svg></span>
          </div>
        </div>
      </main>
    </section>
  </div>

  <!-- Help balloon -->
  <aside class="balloon">
    <svg class="bulb" viewBox="0 0 16 24"><path d="M8 1.500a6 6 0 0 0-4 10.500c1 1 1 2 1 3.500h6c0-1.500 0-2.500 1-3.500A6 6 0 0 0 8 1.500z" fill="#f5efb0" stroke="#8b8760"/><path d="M5 16h6v4l-2 2H7l-2-2z" fill="#747984"/></svg>
    <div class="balloon-text">
      <h2>Combine 3D surfaces to create<br>complex objects</h2>
      <p>Many 3D commands now support<br>both solids and surfaces.</p>
      <a>Don't show me this again</a>
    </div>
    <div class="balloon-side"><span>×</span><svg viewBox="0 0 12 8"><path d="M1 1h10L6 7.500z" fill="#444"/></svg></div>
  </aside>
  <div class="watermark"><span>S</span><span>J</span></div>
</body>
</html>
```
FILE: styles.css
```css
* {
  box-sizing: border-box;
}

body {
  margin: 0;
  width: 1280px;
  height: 720px;
  overflow: hidden;
  background: #000;
  font-family: "Open Sans", "Noto Sans", sans-serif;
  font-size: 10px;
  color: #dcdee0;
}

svg {
  display: block;
}

i {
  font-style: normal;
}

.sprites {
  position: absolute;
  width: 0;
  height: 0;
}

.desktop {
  display: flex;
  padding-top: 19px;
}

/* Photos window */
.photos {
  width: 450px;
  height: 682px;
  background: #212121;
  display: flex;
  flex-direction: column;
}

.photos-title {
  height: 26px;
  padding: 0 10px;
  display: flex;
  align-items: center;
  justify-content: space-between;
  letter-spacing: -0.17px;
  white-space: nowrap;
  color: #f2f2f2;
}

.photos-title svg {
  width: 90px;
  height: 14px;
}

.photos-tools {
  display: flex;
  height: 40px;
}

.photos-tools a {
  width: 41.5px;
  display: flex;
  align-items: center;
  justify-content: center;
}

.photos-tools a.current {
  width: 57px;
  background: #0a72d8;
}

.photos-tools a:nth-child(2) {
  width: 56px;
}

.photos-tools a.first {
  width: 41px;
  margin-left: 9px;
}

.photos-tools a.edit {
  width: 44px;
  margin-left: 33px;
  gap: 5px;
}

.photos-tools a.dots {
  width: 36px;
  margin-left: 6px;
}

.photos-tools svg {
  width: 15px;
  height: 15px;
  fill: none;
  stroke: #ddd;
  stroke-width: 1.3;
}

.photos-tools .current svg {
  stroke: none;
}

.photos-tools .down {
  width: 8px;
  height: 12px;
  stroke: #1874c8;
}

.photo {
  margin: 113px 0 0 27px;
  width: 397px;
  height: 365px;
}

.photo svg {
  width: 397px;
  height: 365px;
}

.outline {
  fill: none;
  stroke: #0c0c0c;
  stroke-width: 9.5;
  stroke-linejoin: round;
}

.dims {
  fill: none;
  stroke: #3a3a3a;
  stroke-width: 4;
}

.dimtext {
  font-size: 41px;
  font-style: italic;
  letter-spacing: -1px;
  fill: #222;
}

.photos-foot {
  margin-top: auto;
  padding: 0 11px 8px 0;
  display: flex;
  justify-content: flex-end;
}

.photos-foot svg {
  width: 17px;
  height: 17px;
}

/* CAD window */
.cad {
  width: 829px;
  height: 682px;
  margin-left: 1px;
  background: #1f262e;
  border-left: 1px solid #245a78;
  display: flex;
  flex-direction: column;
}

.cad svg.c {
  width: 8px;
  height: 8px;
}

.cad-head {
  display: flex;
  height: 38px;
}

.app-logo {
  width: 39px;
  padding: 4px 0 0 8px;
}

.app-logo svg {
  width: 22px;
  height: 27px;
}

.head-rows {
  flex: 1;
}

.title-row {
  height: 22px;
  display: grid;
  grid-template-columns: repeat(8, 20px) 12px 14px 117px 16px 148px 20px 22px 66px 14px 20px 20px 8px 12px 18px 12px 50px 20px 20px 22px;
  align-items: center;
  justify-items: center;
}

.title-row svg {
  width: 14px;
  height: 14px;
}

.doc-name {
  justify-self: end;
  padding-right: 10px;
  letter-spacing: -0.3px;
}

.search-box {
  width: 148px;
  height: 17px;
  padding-left: 2px;
  background: #434c5d;
  color: #b3b8c1;
  font-style: italic;
  line-height: 17px;
  white-space: nowrap;
  font-size: 9.4px;
}

.user-name {
  justify-self: start;
  letter-spacing: -0.35px;
}

.sep {
  width: 1px;
  height: 14px;
  background: #3b424c;
}

.help {
  width: 14px;
  height: 14px;
  border-radius: 50%;
  background: #dedede;
  color: #333;
  text-align: center;
  line-height: 14px;
  font-weight: 600;
}

.tab-row {
  display: grid;
  grid-template-columns: 46px 41px 48px 41px 55px 63px 40px 57px 38px 52px 46px 51px 66px 73px 13px 24px 12px;
  height: 16px;
  align-items: center;
  justify-items: center;
  color: #a9aeb6;
  letter-spacing: -0.15px;
  white-space: nowrap;
}

.tab-row a {
  line-height: 16px;
}

.tab-row a.active {
  width: 46px;
  text-align: center;
  background: #3b4454;
  color: #e6e6e6;
}

.collapse {
  width: 14px;
  height: 7px;
  background: #e3e3e3;
  color: #222;
  line-height: 6px;
  text-align: center;
  font-size: 7px;
}

.ribbon {
  display: flex;
  gap: 2px;
  height: 81px;
  padding-left: 3px;
}

.panel {
  flex: none;
  background: #3b4454;
  display: flex;
  flex-direction: column;
}

.panel footer {
  margin-top: auto;
  height: 15px;
  display: flex;
  align-items: center;
  justify-content: center;
  gap: 4px;
  white-space: nowrap;
}

.panel footer svg.c {
  width: 10px;
  height: 10px;
}

.tools {
  display: flex;
  height: 64px;
}

.big {
  display: flex;
  flex-direction: column;
  align-items: center;
  padding-top: 4px;
  line-height: 13px;
  text-align: center;
}

.big svg {
  width: 28px;
  height: 28px;
}

.big span {
  margin-top: 4px;
}

.big svg.c {
  margin-top: 0;
}

.small {
  display: grid;
  grid-auto-rows: 21px;
  align-items: center;
  justify-items: center;
  padding-top: 2px;
}

.small svg {
  width: 15px;
  height: 15px;
}

.small svg.on {
  width: 19px;
  height: 18px;
  padding: 1px 2px;
  background: #182330;
}

.modeling {
  width: 110px;
}

.modeling .big {
  width: 39px;
}

.modeling .big + .big {
  width: 46px;
}

.modeling .one {
  width: 26px;
}

.mesh {
  width: 63px;
}

.mesh .big,
.mesh .big span {
  width: 41px;
}

.mesh .big span,
.section .big span {
  margin-top: 2px;
}

.mesh .one {
  width: 20px;
}

.mesh footer {
  padding-left: 14px;
  gap: 14px;
}

.launch {
  width: 7px;
  height: 7px;
}

.editing {
  width: 77px;
}

.editing .tools {
  grid-template-columns: 22px 23px 22px 9px;
}

.editing footer {
  gap: 2px;
}

.draw {
  width: 76px;
}

.draw .tools {
  grid-template-columns: 20px 22px 23px 11px;
}

.modify {
  width: 119px;
}

.modify .tools {
  grid-template-columns: 21px 24px 19px 25px 18px 11px;
}

.section {
  width: 62px;
}

.section .big {
  width: 60px;
}

.section .big span {
  width: 38px;
}

.section footer {
  justify-content: flex-start;
  padding-left: 3px;
}

.folded {
  width: 48.6px;
  align-items: center;
  padding-top: 4px;
  background: #4a5870;
}

.folded svg {
  width: 28px;
  height: 28px;
}

.folded span {
  margin-top: 1px;
}

.folded svg.c {
  margin: auto 0 2px;
}

.file-tabs {
  height: 25px;
  padding: 4px 0 0 17px;
  display: flex;
  border-bottom: 3px solid #3b4454;
}

.file-tabs a {
  height: 18px;
  line-height: 19px;
  display: flex;
  align-items: center;
  border-radius: 8px 8px 0 0;
  background: #2b333f;
  color: #a8adb5;
}

.file-tabs .start {
  width: 104px;
  padding-left: 11px;
}

.file-tabs .open {
  width: 109px;
  padding: 0 14px 0 10px;
  justify-content: space-between;
  background: #3b4454;
  color: #dadada;
  letter-spacing: -0.2px;
}

.file-tabs .add {
  width: 20px;
  margin-left: 1px;
  justify-content: center;
}

.file-tabs svg {
  width: 10px;
  height: 10px;
}

/* Drawing area */
.viewport {
  position: relative;
  flex: 1;
  background: #212830;
  display: flex;
  flex-direction: column;
}

.scene {
  position: absolute;
  left: -1px;
  top: 0;
  width: 828px;
  height: 538px;
}

.axis {
  font-size: 12px;
  font-weight: 300;
}

.compass {
  font-size: 13px;
  font-weight: 700;
  fill: #a2a8af;
}

.compass .far {
  font-size: 8px;
}

.faces {
  font-size: 7px;
  font-weight: 700;
  fill: #444;
}

.view-head {
  height: 22px;
  padding: 0 8px 0 4px;
  display: flex;
  align-items: center;
}

.view-head span {
  flex: 1;
  letter-spacing: -0.2px;
}

.view-head svg {
  width: 11px;
  height: 11px;
  margin-left: 5.5px;
}

.ucs-name {
  width: 55px;
  height: 14px;
  margin: 120px 34px 0 auto;
  padding: 0 4px 0 3px;
  border: 1px solid #a9adb2;
  border-radius: 3px;
  background: #8d9298;
  color: #444b55;
  font-size: 8.5px;
  line-height: 11px;
  display: flex;
  justify-content: space-between;
}

.navbar {
  width: 27px;
  height: 173px;
  margin: 20px 4px 0 auto;
  border-radius: 2px;
  background: #666b74;
}

.navbar svg {
  width: 26px;
  height: 172px;
}

.command {
  margin: auto 0 0 166px;
  display: flex;
  width: 495px;
  height: 22px;
}

.handle {
  width: 46px;
  background: #29303a;
  display: flex;
  align-items: center;
  gap: 3px;
  padding-left: 2px;
}

.handle i {
  width: 5px;
  height: 14px;
  background: radial-gradient(#c6c6c6 35%, transparent 40%) 0 0 / 2.5px 2.5px;
}

.handle svg {
  width: 12px;
  height: 12px;
}

.handle svg.wr {
  width: 14px;
  height: 14px;
  margin-left: 4px;
}

.prompt {
  flex: 1;
  padding: 0 4px 0 3px;
  display: flex;
  align-items: center;
  background: #fff;
  color: #222;
  font-family: "DejaVu Sans Mono", monospace;
  font-size: 10px;
}

.prompt svg {
  width: 14px;
  height: 14px;
}

.prompt b {
  margin: 0 5px 0 4px;
}

.prompt em {
  margin-left: auto;
  font-style: normal;
  font-size: 10px;
}

.bottom {
  display: flex;
  height: 23px;
}

.layouts {
  display: flex;
  width: 372px;
  padding-left: 10px;
  height: 17px;
  gap: 1px;
  letter-spacing: -0.15px;
}

.layouts a {
  width: 53px;
  height: 16px;
  line-height: 17px;
  text-align: center;
  border-radius: 0 0 8px 8px;
  background: #2b333e;
  color: #9ea4ad;
}

.layouts a.active {
  width: 51px;
  background: #3b4454;
  color: #fff;
  font-weight: 700;
}

.layouts a + a {
  margin-right: -0.5px;
}

.layouts a.add {
  width: 20px;
  margin-left: 1px;
  padding: 4px 6px;
}

.layouts svg {
  width: 8px;
  height: 8px;
}

.status {
  display: grid;
  grid-template-columns: 41px 22px 18px 16px 20px 20px 14px 20px 13px 21px 20px 15px 20px 20px 20px 17px 11px 24px 11px 22px 22px 26px 20px;
  height: 21px;
  margin-left: -1px;
  background: #3b4454;
}

.status > * {
  display: flex;
  align-items: center;
  justify-content: center;
  white-space: nowrap;
  letter-spacing: -0.3px;
}

.status b {
  font-weight: 600;
  font-size: 10.5px;
}

.status svg {
  width: 14px;
  height: 14px;
}

.status .l {
  border-left: 1px solid #262d37;
}

.status .on {
  background: #568bc8;
}

/* Help balloon floats over the ribbon */
.balloon {
  position: absolute;
  left: 963px;
  top: 47px;
  width: 204px;
  height: 93px;
  padding: 8px 5px 6px 8px;
  display: flex;
  border-radius: 4px;
  background: linear-gradient(rgba(215, 217, 221, 0.84), rgba(203, 206, 212, 0.88));
  border: 1px solid #a9adb4;
  color: #30343a;
}

.balloon::before {
  content: "";
  position: absolute;
  left: 174px;
  top: -10px;
  border: 10px solid transparent;
  border-top: 0;
  border-bottom-color: #c6c8cc;
}

.bulb {
  width: 13px;
  height: 20px;
  margin-top: -1px;
}

.balloon-text {
  width: 152px;
  margin-left: 8px;
  white-space: nowrap;
}

.balloon h2 {
  margin: 0;
  font-size: 10px;
  line-height: 13.5px;
  letter-spacing: -0.35px;
  color: #111;
}

.balloon p {
  margin: 4px 0;
  line-height: 13.5px;
  letter-spacing: -0.1px;
}

.balloon a {
  color: #2525c8;
  text-decoration: underline;
  letter-spacing: -0.25px;
}

.balloon-side {
  display: flex;
  flex-direction: column;
  align-items: center;
  justify-content: space-between;
  margin-left: auto;
  padding-right: 3px;
}

.balloon-side span {
  width: 9px;
  height: 9px;
  margin: -5px -6px 0 0;
  border-radius: 50%;
  background: #73777e;
  color: #ddd;
  line-height: 8px;
  text-align: center;
}

.balloon-side svg {
  width: 11px;
  height: 8px;
}

.watermark {
  position: absolute;
  left: 1231px;
  top: 662px;
  display: flex;
  color: #8bc7c7;
  font-family: "Liberation Serif", serif;
  font-style: italic;
  font-weight: 700;
  font-size: 29px;
  line-height: 30px;
}

.watermark span + span {
  margin: 6px 0 0 -1px;
}
```
